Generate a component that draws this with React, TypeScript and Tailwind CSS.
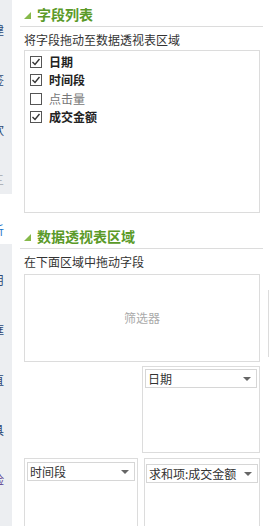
import React from "react";

const sideItems = [
  { t: "建", c: "text-[#2c4a78]" },
  { t: "签", c: "text-[#2c4a78]" },
  { t: "饮", c: "text-[#2c4a78]" },
  { t: "三", c: "text-[#b0b4ba]" },
  { t: "析", c: "text-[#1a73c8]", active: true },
  { t: "用", c: "text-[#2c4a78]" },
  { t: "框", c: "text-[#2c4a78]" },
  { t: "直", c: "text-[#2c4a78]" },
  { t: "具", c: "text-[#2c4a78]" },
  { t: "脸", c: "text-[#5b3f8f]" },
];

const fields = [
  { name: "日期", checked: true },
  { name: "时间段", checked: true },
  { name: "点击量", checked: false },
  { name: "成交金额", checked: true },
];

const Heading = ({ title }: { title: string }) => (
  <div className="h-[27px] shrink-0 border-b border-[#dcdcdc] flex items-start pt-[5px]">
    <svg width="7" height="7" viewBox="0 0 7 7" className="ml-[4px] mt-[7px]">
      <polygon points="7,0 7,7 0,7" fill="#86b94a" />
    </svg>
    <span className="ml-[6px] text-[14px] leading-[18px] font-bold text-[#5a9a28]">
      {title}
    </span>
  </div>
);

const CheckBox = ({ checked }: { checked: boolean }) => (
  <svg width="12" height="12" viewBox="0 0 12 12" className="shrink-0">
    <rect x="0.5" y="0.5" width="11" height="11" fill="#fff" stroke="#555" />
    {checked && (
      <polyline
        points="2.5,6 5,8.5 9.5,3"
        fill="none"
        stroke="#333"
        strokeWidth="1.4"
      />
    )}
  </svg>
);

const FieldPill = ({ label }: { label: string }) => (
  <div className="h-[19px] border border-[#d6d6d6] bg-white flex items-center justify-between pl-[2px] pr-[5px]">
    <span className="text-[12px] leading-[16px] text-[#333] whitespace-nowrap">{label}</span>
    <span className="w-0 h-0 border-l-[4px] border-r-[4px] border-t-[4px] border-l-transparent border-r-transparent border-t-[#666]" />
  </div>
);

export default function App() {
  return (
    <div
      className="w-[269px] h-[526px] flex items-start relative overflow-hidden bg-white"
      style={{ fontFamily: '"Noto Sans CJK SC", "Liberation Sans", sans-serif' }}
    >
      {/* left tool strip, clipped */}
      <div className="w-[12px] h-[526px] shrink-0 flex flex-col overflow-hidden">
        {sideItems.map((s, i) => (
          <div
            key={i}
            className={`shrink-0 flex items-start ${
              s.active ? "bg-white" : "bg-[#eceef1]"
            } ${i === 0 ? "h-[44px] pt-[23px]" : "h-[50px] pt-[29px]"}`}
          >
            <span className={`text-[12px] leading-[14px] ml-[-8px] ${s.c}`}>{s.t}</span>
          </div>
        ))}
        <div className="flex-1 bg-[#eceef1]" />
      </div>

      {/* main panel */}
      <div className="ml-[8px] w-[243px] shrink-0 flex flex-col">
        <Heading title="字段列表" />
        <div className="mt-[5px] pl-[4px] text-[12px] leading-[16px] text-[#333] shrink-0">
          将字段拖动至数据透视表区域
        </div>
        <div className="mt-[2px] ml-[4px] w-[236px] h-[163px] shrink-0 border border-[#dcdcdc] pt-[2px] pl-[5px]">
          {fields.map((f, i) => (
            <div
              key={f.name}
              className={`flex items-center gap-[7px] ${i === 0 ? "h-[18px]" : "h-[18.5px]"}`}
            >
              <CheckBox checked={f.checked} />
              <span
                className={`text-[12px] leading-[16px] ${
                  f.checked ? "font-bold text-[#222]" : "text-[#777]"
                }`}
              >
                {f.name}
              </span>
            </div>
          ))}
        </div>

        <div className="mt-[9px] shrink-0">
          <Heading title="数据透视表区域" />
        </div>
        <div className="mt-[5px] pl-[4px] text-[12px] leading-[16px] text-[#333] shrink-0">
          在下面区域中拖动字段
        </div>
        <div className="mt-[4px] ml-[4px] w-[236px] h-[88px] shrink-0 border border-[#dcdcdc] flex items-center justify-center">
          <span className="text-[12px] text-[#aaa]">筛选器</span>
        </div>

        <div className="mt-[4px] ml-[122px] w-[118px] h-[87px] shrink-0 border border-[#dcdcdc] px-[2px] pt-[2px]">
          <FieldPill label="日期" />
        </div>

        <div className="mt-[5px] ml-[4px] flex gap-[6px] shrink-0">
          <div className="w-[114px] h-[80px] border border-[#dcdcdc] px-[2px] pt-[3px]">
            <FieldPill label="时间段" />
          </div>
          <div className="w-[116px] h-[80px] border border-[#dcdcdc] px-[1px] pt-[5px]">
            <FieldPill label="求和项:成交金额" />
          </div>
        </div>
      </div>

      <div className="absolute left-[268px] top-[290px] w-[1px] h-[67px] bg-[#dcdcdc]" />
    </div>
  );
}
